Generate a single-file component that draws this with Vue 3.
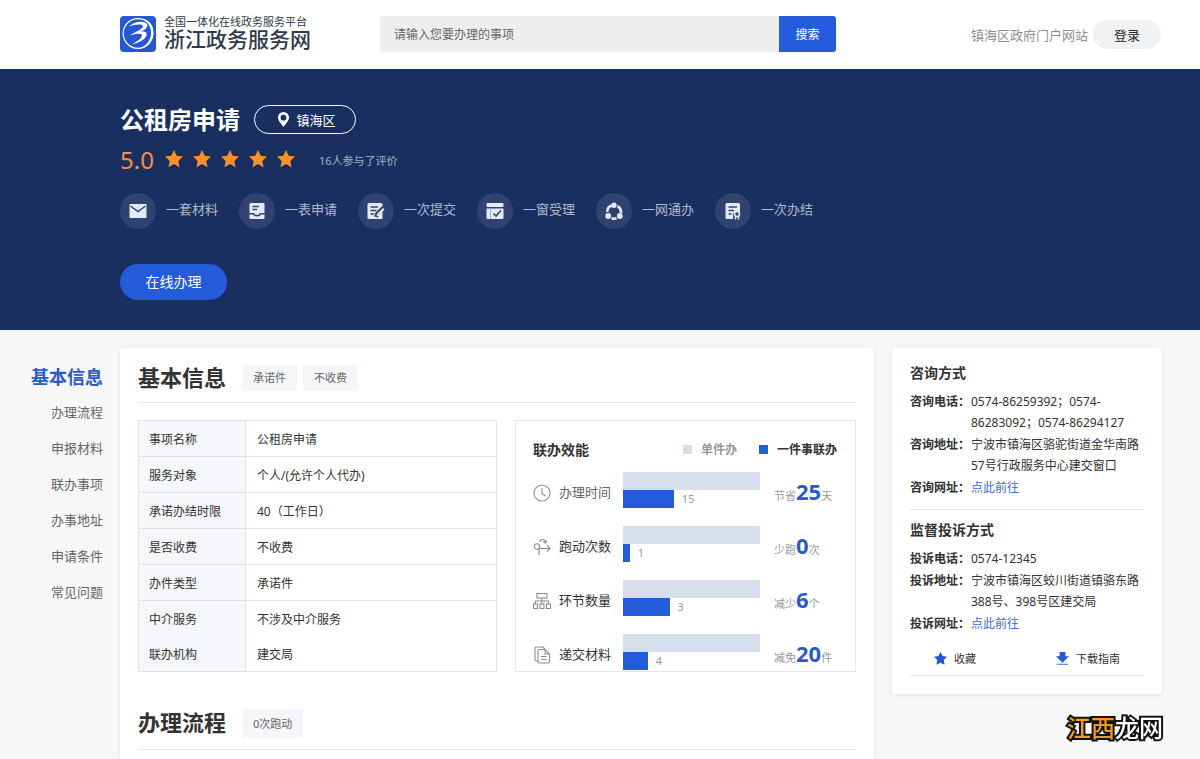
<script setup>
const features = [
  { label: '一套材料', icon: 'mail' },
  { label: '一表申请', icon: 'form' },
  { label: '一次提交', icon: 'edit' },
  { label: '一窗受理', icon: 'window' },
  { label: '一网通办', icon: 'network' },
  { label: '一次办结', icon: 'done' },
]

const sections = ['办理流程', '申报材料', '联办事项', '办事地址', '申请条件', '常见问题']

const info = [
  ['事项名称', '公租房申请'],
  ['服务对象', '个人/(允许个人代办)'],
  ['承诺办结时限', '40（工作日）'],
  ['是否收费', '不收费'],
  ['办件类型', '承诺件'],
  ['中介服务', '不涉及中介服务'],
  ['联办机构', '建交局'],
]

const metrics = [
  { label: '办理时间', icon: 'clock', value: 15, share: 37, verb: '节省', saved: 25, unit: '天', soft: true },
  { label: '跑动次数', icon: 'route', value: 1, share: 5, verb: '少跑', saved: 0, unit: '次' },
  { label: '环节数量', icon: 'tree', value: 3, share: 34, verb: '减少', saved: 6, unit: '个' },
  { label: '递交材料', icon: 'docs', value: 4, share: 18, verb: '减免', saved: 20, unit: '件' },
]
</script>

<template>
  <div class="page">
    <header class="top">
      <a class="brand" href="#">
        <svg class="logo" viewBox="0 0 36 36" aria-hidden="true">
          <rect width="36" height="36" rx="4" fill="#2459d3" />
          <circle cx="18" cy="17.500" r="14.800" fill="none" stroke="#fff" stroke-width="1.200" />
          <path d="M22 2.500C30 4 34 10 33.300 18C32.500 26 27 31.500 19 32.500C26 30 30.500 25 31 18C31.500 11 28 6 22 2.500Z" fill="#fff" />
          <path d="M9 10.500C13 6.500 20 4.500 25 6.500C29.500 9 27 13 21 15.500C25 15 27.500 16.500 26.500 19.500C25 23.500 19 27 11.500 28.500C17 25.500 21.500 22.500 22 19.500C22 17 17 17.500 9.500 19.500C14 16.500 22 13.500 23 10.500C23.500 7.500 15 8 9 10.500Z" fill="#fff" />
        </svg>
        <span class="brand-text">
          <span class="brand-sub">全国一体化在线政务服务平台</span>
          <span class="brand-name">浙江政务服务网</span>
        </span>
      </a>
      <form class="search" @submit.prevent>
        <input type="text" aria-label="搜索事项" placeholder="请输入您要办理的事项" />
        <button type="submit">搜索</button>
      </form>
      <div class="account">
        <a href="#">镇海区政府门户网站</a>
        <button type="button">登录</button>
      </div>
    </header>

    <section class="hero">
      <div class="hero-title">
        <h1>公租房申请</h1>
        <button type="button" class="region">
          <svg viewBox="0 0 11 15" aria-hidden="true">
            <path fill-rule="evenodd" d="M5.500 0A5.500 5.500 0 0 1 11 5.500C11 9 7.500 12 5.500 15C3.500 12 0 9 0 5.500A5.500 5.500 0 0 1 5.500 0ZM5.500 2.800A2.900 2.900 0 1 0 5.500 8.600A2.900 2.900 0 0 0 5.500 2.800Z" fill="#fff" />
          </svg>
          镇海区
        </button>
      </div>
      <div class="rating">
        <span class="score">5.0</span>
        <span class="stars">
          <svg v-for="n in 5" :key="n" viewBox="0 0 18 18" aria-hidden="true">
            <path d="M9 0L11.700 5.800L18 6.500L13.300 10.900L14.600 17.200L9 14.100L3.400 17.200L4.700 10.900L0 6.500L6.300 5.800Z" fill="#fd912e" />
          </svg>
        </span>
        <span class="votes">16人参与了评价</span>
      </div>
      <ul class="features">
        <li v-for="f in features" :key="f.label">
          <span class="disc">
            <svg viewBox="0 0 18 18" aria-hidden="true">
              <template v-if="f.icon === 'mail'">
                <rect x="0.500" y="2" width="17" height="14" rx="1" fill="#e3ebfb" />
                <path d="M1.500 4L9 9.500L16.500 4" fill="none" stroke="#33436d" stroke-width="1.500" />
              </template>
              <template v-else-if="f.icon === 'form'">
                <path d="M3 1H15.500Q16.500 1 16.500 2V11H12Q11.500 13 9 13T6 11H1.500V2Q1.500 1 3 1Z" fill="#e3ebfb" />
                <path d="M1.500 12.500H5Q6 14.500 9 14.500T13 12.500H16.500V16Q16.500 17 15.500 17H2.500Q1.500 17 1.500 16Z" fill="#e3ebfb" />
                <path d="M4.500 4.500H11M4.500 7.500H9" stroke="#33436d" stroke-width="1.400" />
              </template>
              <template v-else-if="f.icon === 'edit'">
                <path d="M2 1H14Q15.500 1 15.500 2.500V17H2Q.5 17 .5 15.500V2.500Q.5 1 2 1Z" fill="#e3ebfb" />
                <path d="M3.500 5H11M3.500 8.500H9.500M3.500 12H7" stroke="#33436d" stroke-width="1.400" />
                <path d="M9 15L10 12L16.500 5.500" fill="none" stroke="#33436d" stroke-width="4" />
                <path d="M9.500 14.500L10 12L16 6L17.500 7.500L11.500 13.800Z" fill="#e3ebfb" />
              </template>
              <template v-else-if="f.icon === 'window'">
                <rect x="0.500" y="1" width="17" height="4" rx="1" fill="#e3ebfb" />
                <path d="M.5 6.500H17.500V16Q17.500 17 16.500 17H1.500Q.5 17 .5 16Z" fill="#e3ebfb" />
                <path d="M4.500 6.500V17" stroke="#a2aec8" />
                <path d="M7.500 11.500L10 14L15 8.500" fill="none" stroke="#33436d" stroke-width="1.600" />
              </template>
              <template v-else-if="f.icon === 'network'">
                <path d="M6.500 3.500A7 7 0 0 0 2.200 10M12.500 4.200A7 7 0 0 1 16 11M6.500 16.300A7 7 0 0 0 11.500 16.300" fill="none" stroke="#e3ebfb" stroke-width="2.600" />
                <circle cx="9" cy="3.200" r="2.700" fill="#e3ebfb" />
                <circle cx="3.200" cy="14" r="2.900" fill="#e3ebfb" />
                <circle cx="14.800" cy="14" r="2.900" fill="#e3ebfb" />
              </template>
              <template v-else>
                <path d="M3 1H14.500Q16 1 16 2.500V10H12Q9 10 9 13V17H3Q1.500 17 1.500 15.500V2.500Q1.500 1 3 1Z" fill="#e3ebfb" />
                <path d="M4.500 5H13M4.500 8.500H10M4.500 12H7.500" stroke="#33436d" stroke-width="1.400" />
                <circle cx="13" cy="12" r="2.500" fill="none" stroke="#e3ebfb" stroke-width="1.500" />
                <path d="M11.500 14V17.500M14.500 14V17.500" stroke="#e3ebfb" stroke-width="1.500" />
              </template>
            </svg>
          </span>
          <span class="feature-label">{{ f.label }}</span>
        </li>
      </ul>
      <button type="button" class="apply">在线办理</button>
    </section>

    <div class="body">
      <nav class="side-nav">
        <a class="current" href="#">基本信息</a>
        <a v-for="s in sections" :key="s" href="#">{{ s }}</a>
      </nav>

      <main class="card main">
        <div class="section-head">
          <h2>基本信息</h2>
          <span class="tag">承诺件</span>
          <span class="tag">不收费</span>
        </div>
        <div class="overview">
          <table>
            <tbody>
              <tr v-for="[name, value] in info" :key="name">
                <th scope="row">{{ name }}</th>
                <td>{{ value }}</td>
              </tr>
            </tbody>
          </table>
          <section class="chart">
            <div class="chart-head">
              <h3>联办效能</h3>
              <span class="legend single">单件办</span>
              <span class="legend joint">一件事联办</span>
            </div>
            <div class="metrics">
              <div v-for="m in metrics" :key="m.label" class="metric">
                <svg viewBox="0 0 18 18" fill="none" stroke="#8c8c8c" stroke-width="1.100" aria-hidden="true">
                  <template v-if="m.icon === 'clock'">
                    <circle cx="9" cy="9" r="8" />
                    <path d="M9 4V9.500L12.500 12" />
                  </template>
                  <template v-else-if="m.icon === 'route'">
                    <circle cx="4" cy="8.500" r="2.800" />
                    <path d="M7 4Q7 1.500 9.500 1.500T12.500 4M10 3.500L12.500 5L14 2.500M6.500 10.500H17M14 7.500L17 10.500L14 13.500M6 11V17" />
                  </template>
                  <template v-else-if="m.icon === 'tree'">
                    <rect x="4" y="1.500" width="10" height="4.500" />
                    <path d="M9 6V9M2.500 12V9H15.500V12M9 9V12" />
                    <rect x="0.500" y="12" width="4" height="4.500" />
                    <rect x="7" y="12" width="4" height="4.500" />
                    <rect x="13.500" y="12" width="4" height="4.500" />
                  </template>
                  <template v-else>
                    <path d="M5 15H3.500Q2 15 2 13.500V2.500Q2 1 3.500 1H10L12 3" />
                    <path d="M6.500 3.500H12L16.500 8V15.500Q16.500 17 15 17H6.500Q5 17 5 15.500V5Q5 3.500 6.500 3.500ZM12 3.500V8H16.500M8 10.500H13.500M8 13.500H13.500" />
                  </template>
                </svg>
                <span class="metric-label" :class="{ soft: m.soft }">{{ m.label }}</span>
                <div class="bars">
                  <div class="bar-single"></div>
                  <div class="bar-line">
                    <div class="bar-joint" :style="{ width: m.share + '%' }"></div>
                    <span>{{ m.value }}</span>
                  </div>
                </div>
                <div class="saved">{{ m.verb }}<strong>{{ m.saved }}</strong>{{ m.unit }}</div>
              </div>
            </div>
          </section>
        </div>
        <div class="section-head second">
          <h2>办理流程</h2>
          <span class="tag">0次跑动</span>
        </div>
      </main>

      <aside class="card contact">
        <h3>咨询方式</h3>
        <dl>
          <div><dt>咨询电话：</dt><dd>0574-86259392；0574-<wbr />86283092；0574-86294127</dd></div>
          <div><dt>咨询地址：</dt><dd>宁波市镇海区骆驼街道金华南路57号行政服务中心建交窗口</dd></div>
          <div><dt>咨询网址：</dt><dd><a href="#">点此前往</a></dd></div>
        </dl>
        <hr />
        <h3>监督投诉方式</h3>
        <dl>
          <div><dt>投诉电话：</dt><dd>0574-12345</dd></div>
          <div><dt>投诉地址：</dt><dd>宁波市镇海区蛟川街道镇骆东路388号、398号区建交局</dd></div>
          <div><dt>投诉网址：</dt><dd><a href="#">点此前往</a></dd></div>
        </dl>
        <div class="actions">
          <button type="button">
            <svg viewBox="0 0 18 18" aria-hidden="true">
              <path d="M9 0L12 5.500L18 6.500L13.600 11L14.600 17.500L9 15L3.400 17.500L4.400 11L0 6.500L6 5.500Z" fill="#2459d3" />
            </svg>
            收藏
          </button>
          <button type="button">
            <svg viewBox="0 0 18 18" aria-hidden="true">
              <path d="M5 0H13V6H18L9 15L0 6H5Z" fill="#2459d3" />
              <path d="M1 17H17" stroke="#2459d3" stroke-width="1.200" />
            </svg>
            下载指南
          </button>
        </div>
      </aside>
    </div>

    <div class="watermark"><span>江西</span>龙网</div>
  </div>
</template>

<style>
body {
  margin: 0;
  background: #f7f7f7;
}
</style>

<style scoped>
.page {
  display: flex;
  flex-direction: column;
  min-height: 100vh;
  font-family: "Noto Sans", "Noto Sans CJK SC", sans-serif;
  font-size: 12px;
  color: #333;
}
.page * {
  box-sizing: border-box;
}
h1,
h2,
h3,
ul,
dl,
dd {
  margin: 0;
  padding: 0;
}
a {
  color: inherit;
  text-decoration: none;
}
button,
input {
  margin: 0;
  padding: 0;
  border: 0;
  font: inherit;
  color: inherit;
}
button {
  background: none;
  cursor: pointer;
}
svg {
  display: block;
  flex: none;
}

.top {
  display: flex;
  align-items: center;
  height: 69px;
  padding: 0 39px 1px 120px;
  background: #fff;
}
.brand {
  display: flex;
  gap: 8px;
  width: 260px;
  flex: none;
  font-family: "Liberation Sans", "Noto Sans CJK SC", sans-serif;
}
.logo {
  width: 36px;
  height: 36px;
}
.brand-text {
  display: flex;
  flex-direction: column;
  color: #2f3b4c;
}
.brand-sub {
  font-size: 11px;
  line-height: 12px;
}
.brand-name {
  font-size: 21px;
  line-height: 24px;
  font-weight: 500;
}
.search {
  display: flex;
  width: 456px;
  height: 36px;
}
.search input {
  flex: 1;
  min-width: 0;
  padding: 0 14px;
  border-radius: 3px 0 0 3px;
  background: #eee;
}
.search input::placeholder {
  color: #666;
  opacity: 1;
}
.search button {
  width: 57px;
  border-radius: 0 3px 3px 0;
  background: #245bdb;
  color: #fff;
}
.account {
  display: flex;
  align-items: center;
  gap: 5px;
  margin-left: auto;
  font-size: 13px;
  color: #8f8f8f;
}
.account button {
  width: 68px;
  height: 29px;
  border-radius: 15px;
  background: #f0f2f4;
  color: #222;
}

.hero {
  padding: 36px 39px 30px 120px;
  background: #192f60;
  color: #fff;
}
.hero-title {
  display: flex;
  align-items: center;
  gap: 14px;
  height: 29px;
}
.hero-title h1 {
  font-size: 24px;
  line-height: 29px;
}
.region {
  display: flex;
  align-items: center;
  justify-content: center;
  gap: 7px;
  width: 102px;
  height: 29px;
  padding-left: 4px;
  border: 1px solid #fff;
  border-radius: 15px;
  font-size: 13px;
}
.region svg {
  width: 11px;
  height: 15px;
}
.rating {
  display: flex;
  align-items: center;
  height: 26px;
  margin-top: 13px;
}
.score {
  width: 45px;
  font-size: 24px;
  line-height: 26px;
  color: #f98f43;
}
.stars {
  display: flex;
  gap: 10px;
  padding-bottom: 2px;
}
.stars svg {
  width: 18px;
  height: 18px;
}
.votes {
  margin-left: 24px;
  font-size: 11px;
  color: #a7b0c6;
}
.features {
  display: flex;
  gap: 21px;
  margin-top: 20px;
  list-style: none;
}
.features li {
  display: flex;
  gap: 10px;
}
.disc {
  display: grid;
  place-items: center;
  width: 36px;
  height: 36px;
  border-radius: 50%;
  background: #304270;
}
.disc svg {
  width: 18px;
  height: 18px;
}
.feature-label {
  font-size: 13px;
  line-height: 32px;
  color: #b1bad0;
}
.apply {
  display: block;
  width: 107px;
  height: 36px;
  margin-top: 35px;
  padding-bottom: 2px;
  border-radius: 18px;
  background: #245bdb;
  font-size: 14px;
}

.body {
  flex: 1;
  display: grid;
  grid-template-columns: 120px minmax(0, 1fr) 288px;
  padding: 18px 38px 0 0;
  background: #f7f7f7;
}
.side-nav {
  display: flex;
  flex-direction: column;
  padding: 13px 17px 0 0;
  text-align: right;
  font-size: 13px;
  line-height: 36px;
  color: #666;
}
.side-nav .current {
  font-size: 18px;
  line-height: 33px;
  font-weight: 700;
  color: #2b5ac9;
}
.card {
  background: #fff;
  border-radius: 4px;
  box-shadow: 0 1px 4px rgba(0, 0, 0, 0.08);
}
.main {
  padding: 0 18px;
  border-radius: 4px 4px 0 0;
}
.section-head {
  display: flex;
  align-items: center;
  height: 55px;
  padding-top: 6px;
  border-bottom: 1px solid #e6e6e6;
}
.section-head h2 {
  margin-right: 16px;
  padding-bottom: 2px;
  font-size: 22px;
  line-height: 28px;
}
.tag {
  margin-right: 6px;
  padding: 0 11px;
  background: #f4f6f9;
  font-size: 11px;
  line-height: 26px;
  color: #666;
}
.second {
  padding-top: 2px;
}
.second .tag {
  line-height: 29px;
}
.overview {
  display: grid;
  grid-template-columns: 359fr 341fr;
  gap: 18px;
  align-items: start;
  margin: 17px 0 23px;
}
table {
  width: 100%;
  border: 1px solid #e2e5e8;
  border-spacing: 0;
}
th,
td {
  height: 36px;
  padding: 0 10px;
  border-bottom: 1px solid #e2e5e8;
  font-weight: 400;
  text-align: left;
}
th {
  width: 107px;
  border-right: 1px solid #e2e5e8;
  background: #f4f6f9;
}
td {
  padding-left: 11px;
}
tr:nth-last-child(-n + 2) > * {
  border-bottom: 0;
}
tr:last-child > * {
  height: 34px;
}
.chart {
  padding: 5px 18px 1px 17px;
  border: 1px solid #e6e6e6;
}
.chart-head {
  display: flex;
  align-items: center;
  height: 46px;
}
.chart-head h3 {
  margin-right: auto;
  font-size: 14px;
}
.legend {
  display: flex;
  align-items: center;
  gap: 9px;
  font-weight: 700;
}
.legend::before {
  content: "";
  width: 9px;
  height: 9px;
  background: #245bdb;
}
.single {
  margin-right: 22px;
  color: #999;
}
.single::before {
  background: #d7deec;
}
.metrics {
  display: grid;
  gap: 18px;
}
.metric {
  display: flex;
  height: 36px;
}
.metric svg {
  width: 18px;
  height: 18px;
  margin: 12px 8px 0 0;
}
.metric-label {
  width: 64px;
  font-size: 13px;
  line-height: 41px;
}
.soft {
  color: #666;
}
.bars {
  flex: 1;
}
.bar-single {
  height: 18px;
  background: #d7deec;
}
.bar-line {
  display: flex;
  gap: 8px;
  font-size: 11px;
  line-height: 18px;
  color: #999;
}
.bar-joint {
  height: 18px;
  background: #245bdb;
}
.saved {
  width: 63px;
  margin-left: 14px;
  font-size: 11px;
  line-height: 38px;
  color: #999;
  white-space: nowrap;
}
.saved strong {
  font-size: 22px;
  color: #2b5ac9;
}

.contact {
  align-self: start;
  margin-left: 18px;
  padding: 14px 18px 18px;
}
.contact h3 {
  font-size: 14px;
  line-height: 22px;
}
.contact dl {
  display: grid;
  gap: 1px;
  margin-top: 7px;
  line-height: 21px;
}
.contact dl div {
  display: flex;
}
.contact dt {
  flex: none;
  width: 61px;
  font-weight: 700;
}
.contact dd a {
  color: #3d6ad6;
}
.contact hr {
  height: 1px;
  margin: 11px 0 9px;
  border: 0;
  background: #e6e6e6;
}
.actions {
  display: grid;
  grid-template-columns: 106px 1fr;
  height: 35px;
  margin-top: 7px;
  border-bottom: 1px solid #e6e6e6;
  font-size: 11px;
}
.actions button {
  display: flex;
  align-items: center;
  gap: 7px;
  padding-left: 24px;
}
.actions button + button {
  padding-left: 40px;
}
.actions svg {
  width: 13px;
  height: 13px;
}
.watermark {
  position: fixed;
  right: 37px;
  bottom: 13px;
  font-size: 24px;
  line-height: 36px;
  font-weight: 500;
  color: #fff;
  -webkit-text-stroke: 4px #111;
  paint-order: stroke fill;
}
.watermark span {
  color: #f39a1e;
}
</style>
